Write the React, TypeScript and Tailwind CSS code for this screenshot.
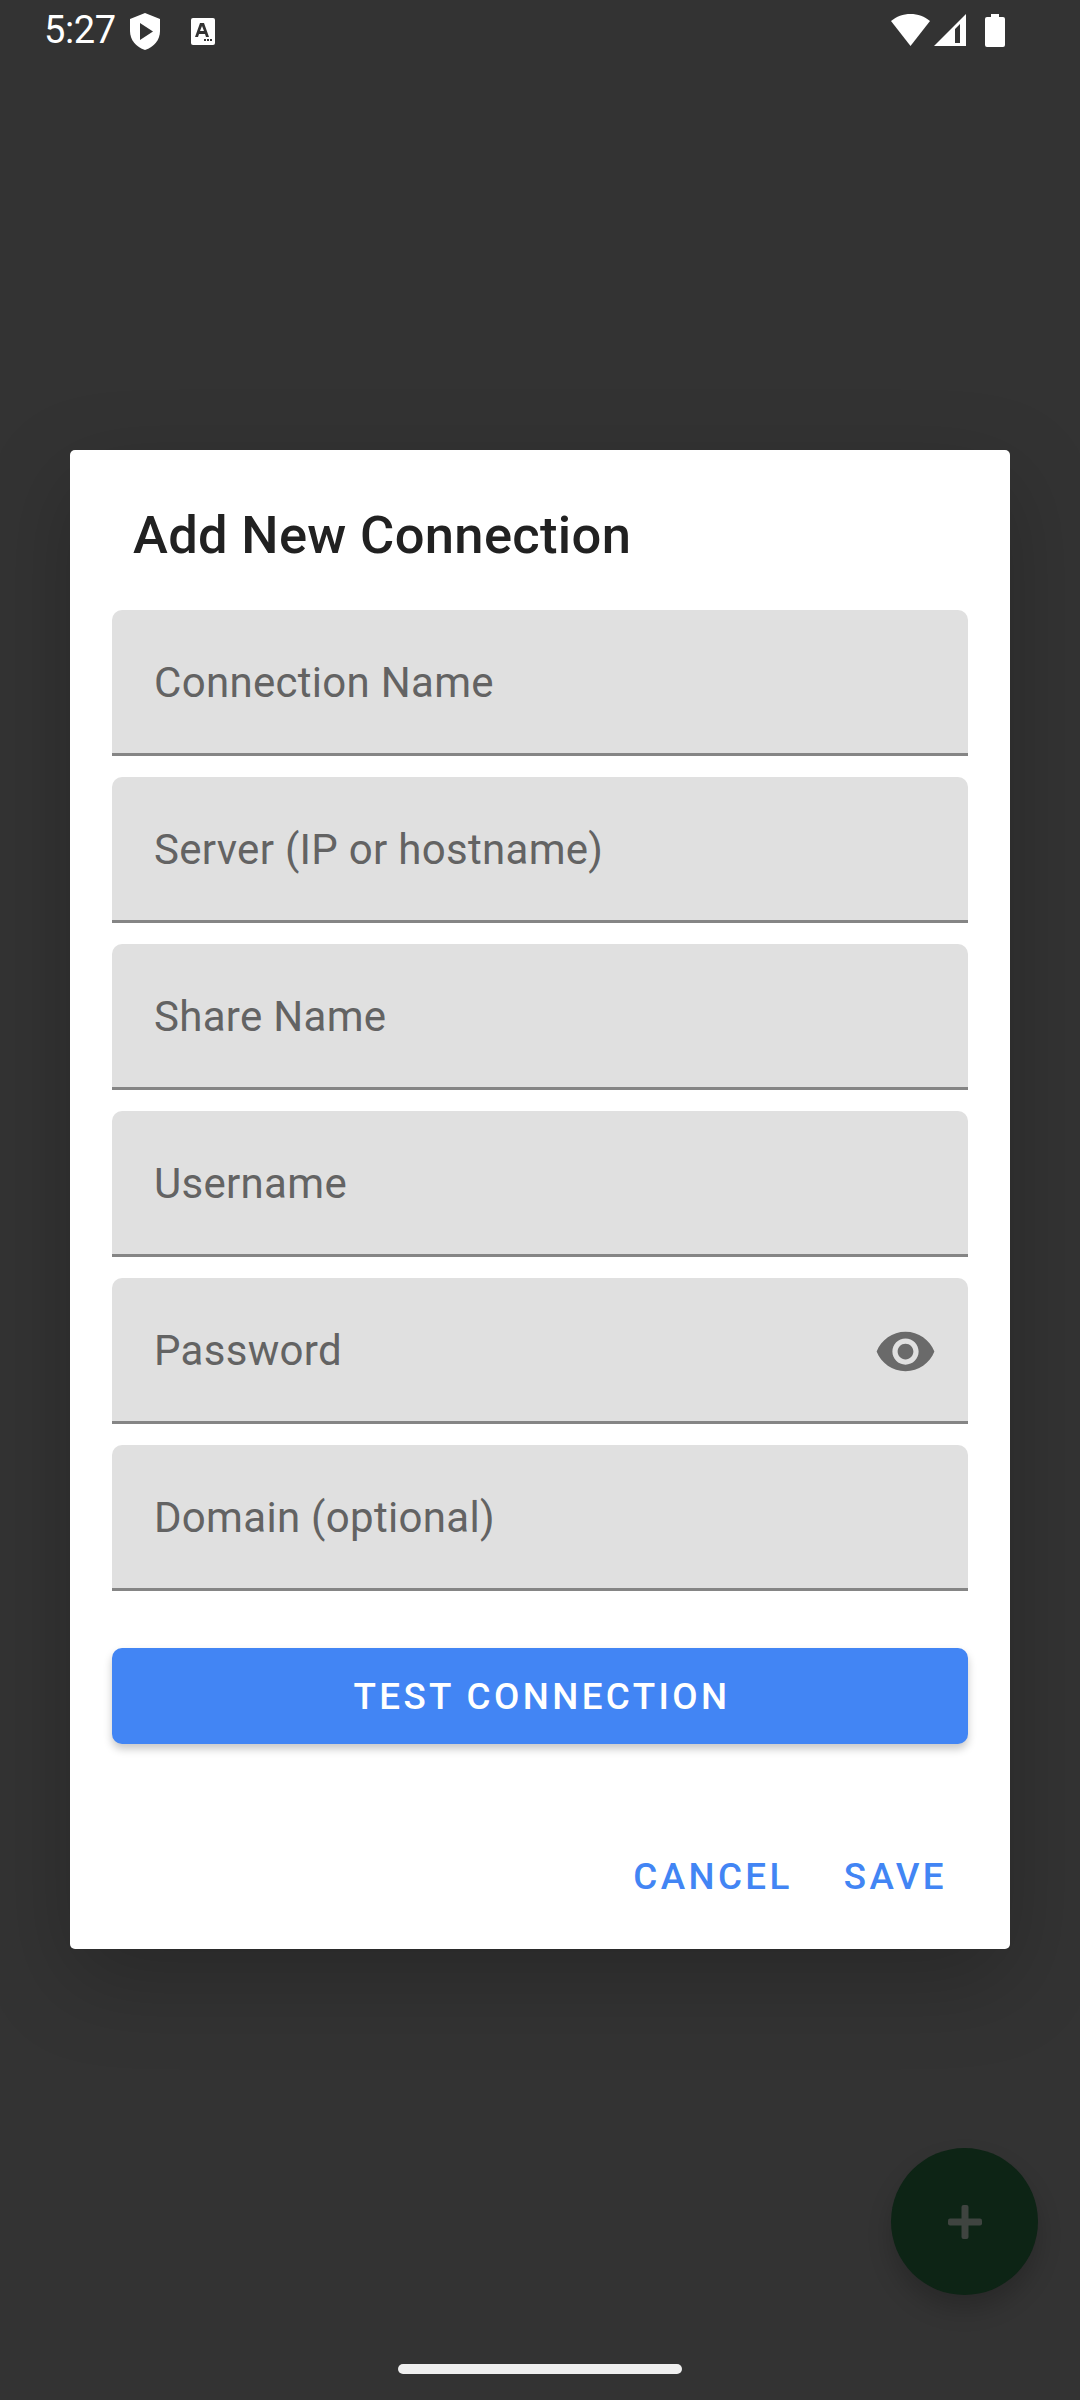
export default function App() {
  const fields = ["Connection Name", "Server (IP or hostname)", "Share Name", "Username", "Password", "Domain (optional)"];
  return (
    <div className="relative w-[1080px] h-[2400px] overflow-hidden bg-[#333333] font-['Roboto',sans-serif]">
      <div className="relative h-[64px] flex items-start text-white">
        <span className="ml-[44px] mt-[10px] text-[38px] leading-[40px] tracking-[-0.4px]">5:27</span>
        <svg className="ml-[14px] mt-[13px] w-[30px] h-[37px]" viewBox="0 0 30 37">
          <path fill="#fff" d="M15 0 30 6v12c0 9-6 16-15 19C6 34 0 27 0 18V6z" />
          <path fill="#333" d="M10 10v17l13-8.500z" />
        </svg>
        <svg className="ml-[31px] mt-[18px] w-[24px] h-[27px]" viewBox="0 0 24 27">
          <rect width="24" height="27" rx="2" fill="#fff" />
          <path fill="#333" d="M9 5h4l5 14h-3l-1-3H8l-1 3H4zm2 3-2 5h4z" fillRule="evenodd" />
          <path fill="#333" d="M13 21h2v2h-2zM16 21h2v2h-2zM19 21h2v2h-2z" />
        </svg>
        <div className="ml-auto mr-[75px] mt-[14px] flex items-start">
          <svg className="w-[39px] h-[32px]" viewBox="0 0 39 32">
            <path fill="#fff" d="M19.500 0C12 0 5.500 2.500 0 7l19.500 25L39 7C33.500 2.500 27 0 19.500 0z" />
          </svg>
          <svg className="ml-[4px] w-[32px] h-[32px]" viewBox="0 0 32 32">
            <path fill="#fff" fillRule="evenodd" d="M32 0v32H0zM26 10l-5 5v14h5z" />
          </svg>
          <svg className="ml-[19px] w-[20px] h-[33px]" viewBox="0 0 20 33">
            <path fill="#fff" d="M6 0h8v3h4a2 2 0 0 1 2 2v26a2 2 0 0 1-2 2H2a2 2 0 0 1-2-2V5a2 2 0 0 1 2-2h4z" />
          </svg>
        </div>
      </div>

      <div className="mt-[386px] mx-[70px] h-[1499px] bg-white rounded-[5px] shadow-[0_30px_90px_rgba(0,0,0,0.22)] flex flex-col">
        <h1 className="mt-[54px] ml-[63px] text-[52.5px] leading-[62px] font-medium tracking-[0.33px] text-[#212121]">Add New Connection</h1>
        <div className="mt-[44px] mx-[42px] flex flex-col gap-[21px]">
          {fields.map((f) => (
            <div key={f} className="h-[146px] bg-[#e0e0e0] rounded-t-[10px] border-b-[3px] border-[#858585] flex items-center pl-[42px] pr-[31px] pb-[1px]">
              <span className="mt-[3px] text-[42px] leading-[50px] tracking-[0.3px] text-[#636363]">{f}</span>
              {f === "Password" && (
                <svg className="ml-auto mt-[5px] w-[63px] h-[63px]" viewBox="0 0 24 24" fill="#6a6a6a">
                  <path d="M12 4.500C7 4.500 2.730 7.610 1 12c1.730 4.390 6 7.500 11 7.500s9.270-3.110 11-7.500c-1.730-4.390-6-7.500-11-7.500zM12 17c-2.760 0-5-2.240-5-5s2.240-5 5-5 5 2.240 5 5-2.240 5-5 5zm0-8c-1.660 0-3 1.340-3 3s1.340 3 3 3 3-1.340 3-3-1.340-3-3-3z" />
                </svg>
              )}
            </div>
          ))}
        </div>
        <button className="mt-[57px] mx-[42px] h-[96px] pt-[2px] pl-[4px] rounded-[10px] bg-[#4285f4] text-white text-[36.75px] font-medium tracking-[3.4px] shadow-[0_5px_8px_rgba(0,0,0,0.22)]">TEST CONNECTION</button>
        <div className="mt-[111px] flex justify-end items-center pr-[63px] text-[36.75px] leading-[44px] font-medium tracking-[3.4px] text-[#4285f4]">
          <span>CANCEL</span>
          <span className="ml-[51px]">SAVE</span>
        </div>
      </div>

      <div className="absolute left-[891px] top-[2148px] w-[147px] h-[147px] rounded-full bg-[#0d2415] flex items-center justify-center shadow-[0_14px_24px_rgba(0,0,0,0.2)]">
        <svg className="w-[34px] h-[34px]" viewBox="0 0 34 34" fill="#3f4440">
          <rect x="13.500" width="7" height="34" rx="2" />
          <rect y="13.500" width="34" height="7" rx="2" />
        </svg>
      </div>
      <div className="absolute left-[398px] top-[2364px] w-[284px] h-[10px] rounded-full bg-[#efefef]" />
    </div>
  );
}
